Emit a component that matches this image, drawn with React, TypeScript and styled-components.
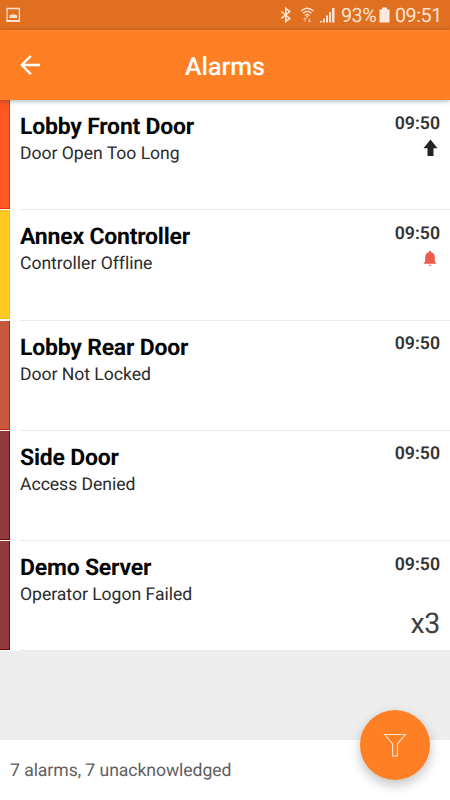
import React from 'react';
import styled, { createGlobalStyle } from 'styled-components';

const GlobalStyle = createGlobalStyle`
  * { box-sizing: border-box; }
  body {
    margin: 0;
    font-family: Roboto, sans-serif;
    font-variant-ligatures: none;
    text-rendering: geometricPrecision;
    background: #ededed;
  }
`;

const Screen = styled.div`
  width: 450px;
  height: 800px;
  display: flex;
  flex-direction: column;
  background: #ededed;
  overflow: hidden;
  position: relative;
`;

const StatusBar = styled.header`
  height: 30px;
  flex: none;
  display: flex;
  align-items: center;
  background: #e06f1f;
  color: #fbe3d3;
  padding: 0 9px 0 6px;
`;

const StatusIcons = styled.div`
  margin-left: auto;
  display: flex;
  align-items: center;
  height: 30px;
`;

const StatusText = styled.span<{ $gap: number; $width: number }>`
  font-size: 19.8px;
  letter-spacing: -0.5px;
  line-height: 30px;
  width: ${(p) => p.$width}px;
  margin-left: ${(p) => p.$gap}px;
  padding-top: 1px;
  white-space: nowrap;
`;

const StatusSvg = styled.svg<{ $gap?: number }>`
  display: block;
  flex: none;
  margin-left: ${(p) => p.$gap ?? 0}px;
`;

const AppBar = styled.div`
  height: 70px;
  flex: none;
  display: grid;
  grid-template-columns: 60px 1fr 60px;
  align-items: center;
  background: #ff8024;
  color: #fff;
  box-shadow: 0 1px 5px rgba(30, 60, 75, 0.42);
  z-index: 1;
`;

const BackButton = styled.button`
  border: 0;
  background: none;
  padding: 0 0 0 20px;
  color: inherit;
  svg { display: block; }
`;

const Title = styled.h1`
  margin: 0;
  padding-top: 5px;
  text-align: center;
  font-size: 25px;
  line-height: 30px;
  font-weight: 500;
`;

const List = styled.ul`
  list-style: none;
  margin: 0;
  padding: 0;
  flex: 1;
`;

const Row = styled.li`
  height: 110.25px;
  display: flex;
  background: #fff;
`;

const Stripe = styled.div<{ $fill: string; $edge: string }>`
  width: 10px;
  margin-bottom: 1.25px;
  background: ${(p) => p.$fill};
  border-right: 1px solid ${(p) => p.$edge};
  border-bottom: 1px solid ${(p) => p.$edge};
`;

const RowBody = styled.div`
  flex: 1;
  margin-left: 10px;
  padding: 12px 10px 0 0;
  display: flex;
  justify-content: space-between;
  border-bottom: 1px solid #e9e9e9;
`;

const Name = styled.div`
  font-size: 23px;
  letter-spacing: -0.22px;
  line-height: 28px;
  padding-top: 1.2px;
  font-weight: 700;
  color: #060606;
`;

const Detail = styled.div`
  font-size: 17.6px;
  line-height: 27px;
  letter-spacing: -0.03px;
  color: #2b2b2b;
`;

const Meta = styled.div`
  display: flex;
  flex-direction: column;
  align-items: flex-end;
  margin-top: 0.5px;
`;

const Time = styled.time`
  font-size: 17.7px;
  line-height: 22px;
  font-weight: 600;
  color: #333;
`;

const IconSlot = styled.div`
  width: 20px;
  height: 20px;
  margin-top: 3.5px;
  svg { display: block; }
`;

const Count = styled.div`
  font-size: 28.5px;
  letter-spacing: -0.3px;
  line-height: 32px;
  margin-top: 9px;
  color: #404040;
`;

const Footer = styled.footer`
  height: 60px;
  flex: none;
  padding: 1px 0 0 10px;
  display: flex;
  align-items: center;
  background: #fff;
  color: #606060;
  font-size: 17.6px;
  letter-spacing: -0.06px;
`;

const FilterButton = styled.button`
  position: absolute;
  right: 20px;
  bottom: 20px;
  width: 70px;
  height: 70px;
  padding: 0;
  border: 0;
  border-radius: 50%;
  background: #ff8024;
  box-shadow: 0 5px 12px rgba(0, 0, 0, 0.24);
  svg { display: block; }
`;

type Kind = 'priority' | 'bell';

interface Alarm {
  name: string;
  detail: string;
  time: string;
  fill: string;
  edge: string;
  icon?: Kind;
  count?: string;
}

const alarms: Alarm[] = [
  { name: 'Lobby Front Door', detail: 'Door Open Too Long', time: '09:50', fill: '#ff5722', edge: '#f32a0c', icon: 'priority' },
  { name: 'Annex Controller', detail: 'Controller Offline', time: '09:50', fill: '#ffc822', edge: '#fcb900', icon: 'bell' },
  { name: 'Lobby Rear Door', detail: 'Door Not Locked', time: '09:50', fill: '#c8583b', edge: '#bd2108' },
  { name: 'Side Door', detail: 'Access Denied', time: '09:50', fill: '#913b3e', edge: '#780008' },
  { name: 'Demo Server', detail: 'Operator Logon Failed', time: '09:50', fill: '#913b3e', edge: '#780008', count: 'x3' },
];

const AlarmIcon = ({ kind }: { kind: Kind }) => (
  <IconSlot>
    {kind === 'priority' ? (
      <svg width="20" height="20" viewBox="0 0 20 20">
        <path d="M10.5 1.5 17.5 10.2H13.5V18H7.5V10.2H3.5Z" fill="#222" />
      </svg>
    ) : (
      <svg width="20" height="20" viewBox="0 0 20 20" fill="#ee5a4c">
        <path d="M9 4.1V3.2Q10 2 11 3.2V4.1Q14.8 5.2 14.8 9.2V13.5L16.6 15.7H3.4L5.2 13.5V9.2Q5.2 5.2 9 4.1Z" />
        <path d="M8.7 16.7H11.3Q11 18 10 18T8.7 16.7Z" />
      </svg>
    )}
  </IconSlot>
);

export default function App() {
  return (
    <>
      <GlobalStyle />
      <Screen>
        <StatusBar>
          <StatusSvg width="15" height="16" viewBox="0 0 15 16">
            <path d="M1.1 1.5H13.4V14H1.1Z" fill="none" stroke="currentColor" strokeWidth="1.3" />
            <path d="M.5 13H14V15H.5ZM3.5 11V8.5L5 7.5 6 8 7.2 6.5 8.4 8 9.5 7.3 11 8.8V11Z" fill="currentColor" />
          </StatusSvg>
          <StatusIcons>
            <StatusSvg width="12" height="16" viewBox="0 0 12 16">
              <path d="M1.3 4.5 9.8 11.4 5.8 14.5V1.4L9.8 4.5 1.3 11.4" fill="none" stroke="currentColor" strokeWidth="1.6" />
            </StatusSvg>
            <StatusSvg $gap={8} width="15" height="16" viewBox="0 0 15 16">
              <g fill="none" stroke="currentColor" strokeWidth="1.3">
                <path d="M1 4Q7.2-1.5 13.5 4M3 6.3Q7.2 2.4 11.5 6.3M5 8.4Q7.2 6.4 9.5 8.4" />
                <path d="M5 15V11M3.5 12.5 5 11 6.5 12.5M9.5 11V15M8 13.5 9.5 15 11 13.5" opacity=".5" />
              </g>
              <circle cx="7.2" cy="9.5" r="1" fill="currentColor" />
            </StatusSvg>
            <StatusSvg $gap={4} width="17" height="16" viewBox="0 0 17 16" fill="currentColor">
              <path d="M1 14H3V15.5H1ZM4 11.5H6V15.5H4ZM7 8.5H9V15.5H7ZM10 5H12V15.5H10ZM13 1H15.5V15.5H13Z" />
            </StatusSvg>
            <StatusText $gap={5} $width={35}>93%</StatusText>
            <StatusSvg $gap={3} width="11" height="16" viewBox="0 0 11 16">
              <path d="M3 .5H8V2.4H10.5V15.5H.5V2.4H3Z" fill="#fdeade" />
            </StatusSvg>
            <StatusText $gap={5} $width={46}>09:51</StatusText>
          </StatusIcons>
        </StatusBar>

        <AppBar>
          <BackButton aria-label="Back">
            <svg width="20" height="20" viewBox="0 0 20 20" fill="none" stroke="currentColor" strokeWidth="2.3">
              <path d="M20 10H2M10.8.9 1.7 10 10.8 19.1" />
            </svg>
          </BackButton>
          <Title>Alarms</Title>
        </AppBar>

        <List>
          {alarms.map((a) => (
            <Row key={a.name}>
              <Stripe $fill={a.fill} $edge={a.edge} />
              <RowBody>
                <div>
                  <Name>{a.name}</Name>
                  <Detail>{a.detail}</Detail>
                </div>
                <Meta>
                  <Time>{a.time}</Time>
                  {(a.icon || a.count) && (a.icon ? <AlarmIcon kind={a.icon} /> : <IconSlot />)}
                  {a.count && <Count>{a.count}</Count>}
                </Meta>
              </RowBody>
            </Row>
          ))}
        </List>

        <Footer>7 alarms, 7 unacknowledged</Footer>

        <FilterButton aria-label="Filter">
          <svg width="70" height="70" viewBox="0 0 70 70">
            <path d="M24.7 24.5H45.3L37.4 34V46H32.6V34Z" fill="none" stroke="#ffe3cc" strokeWidth="1.1" />
          </svg>
        </FilterButton>
      </Screen>
    </>
  );
}
